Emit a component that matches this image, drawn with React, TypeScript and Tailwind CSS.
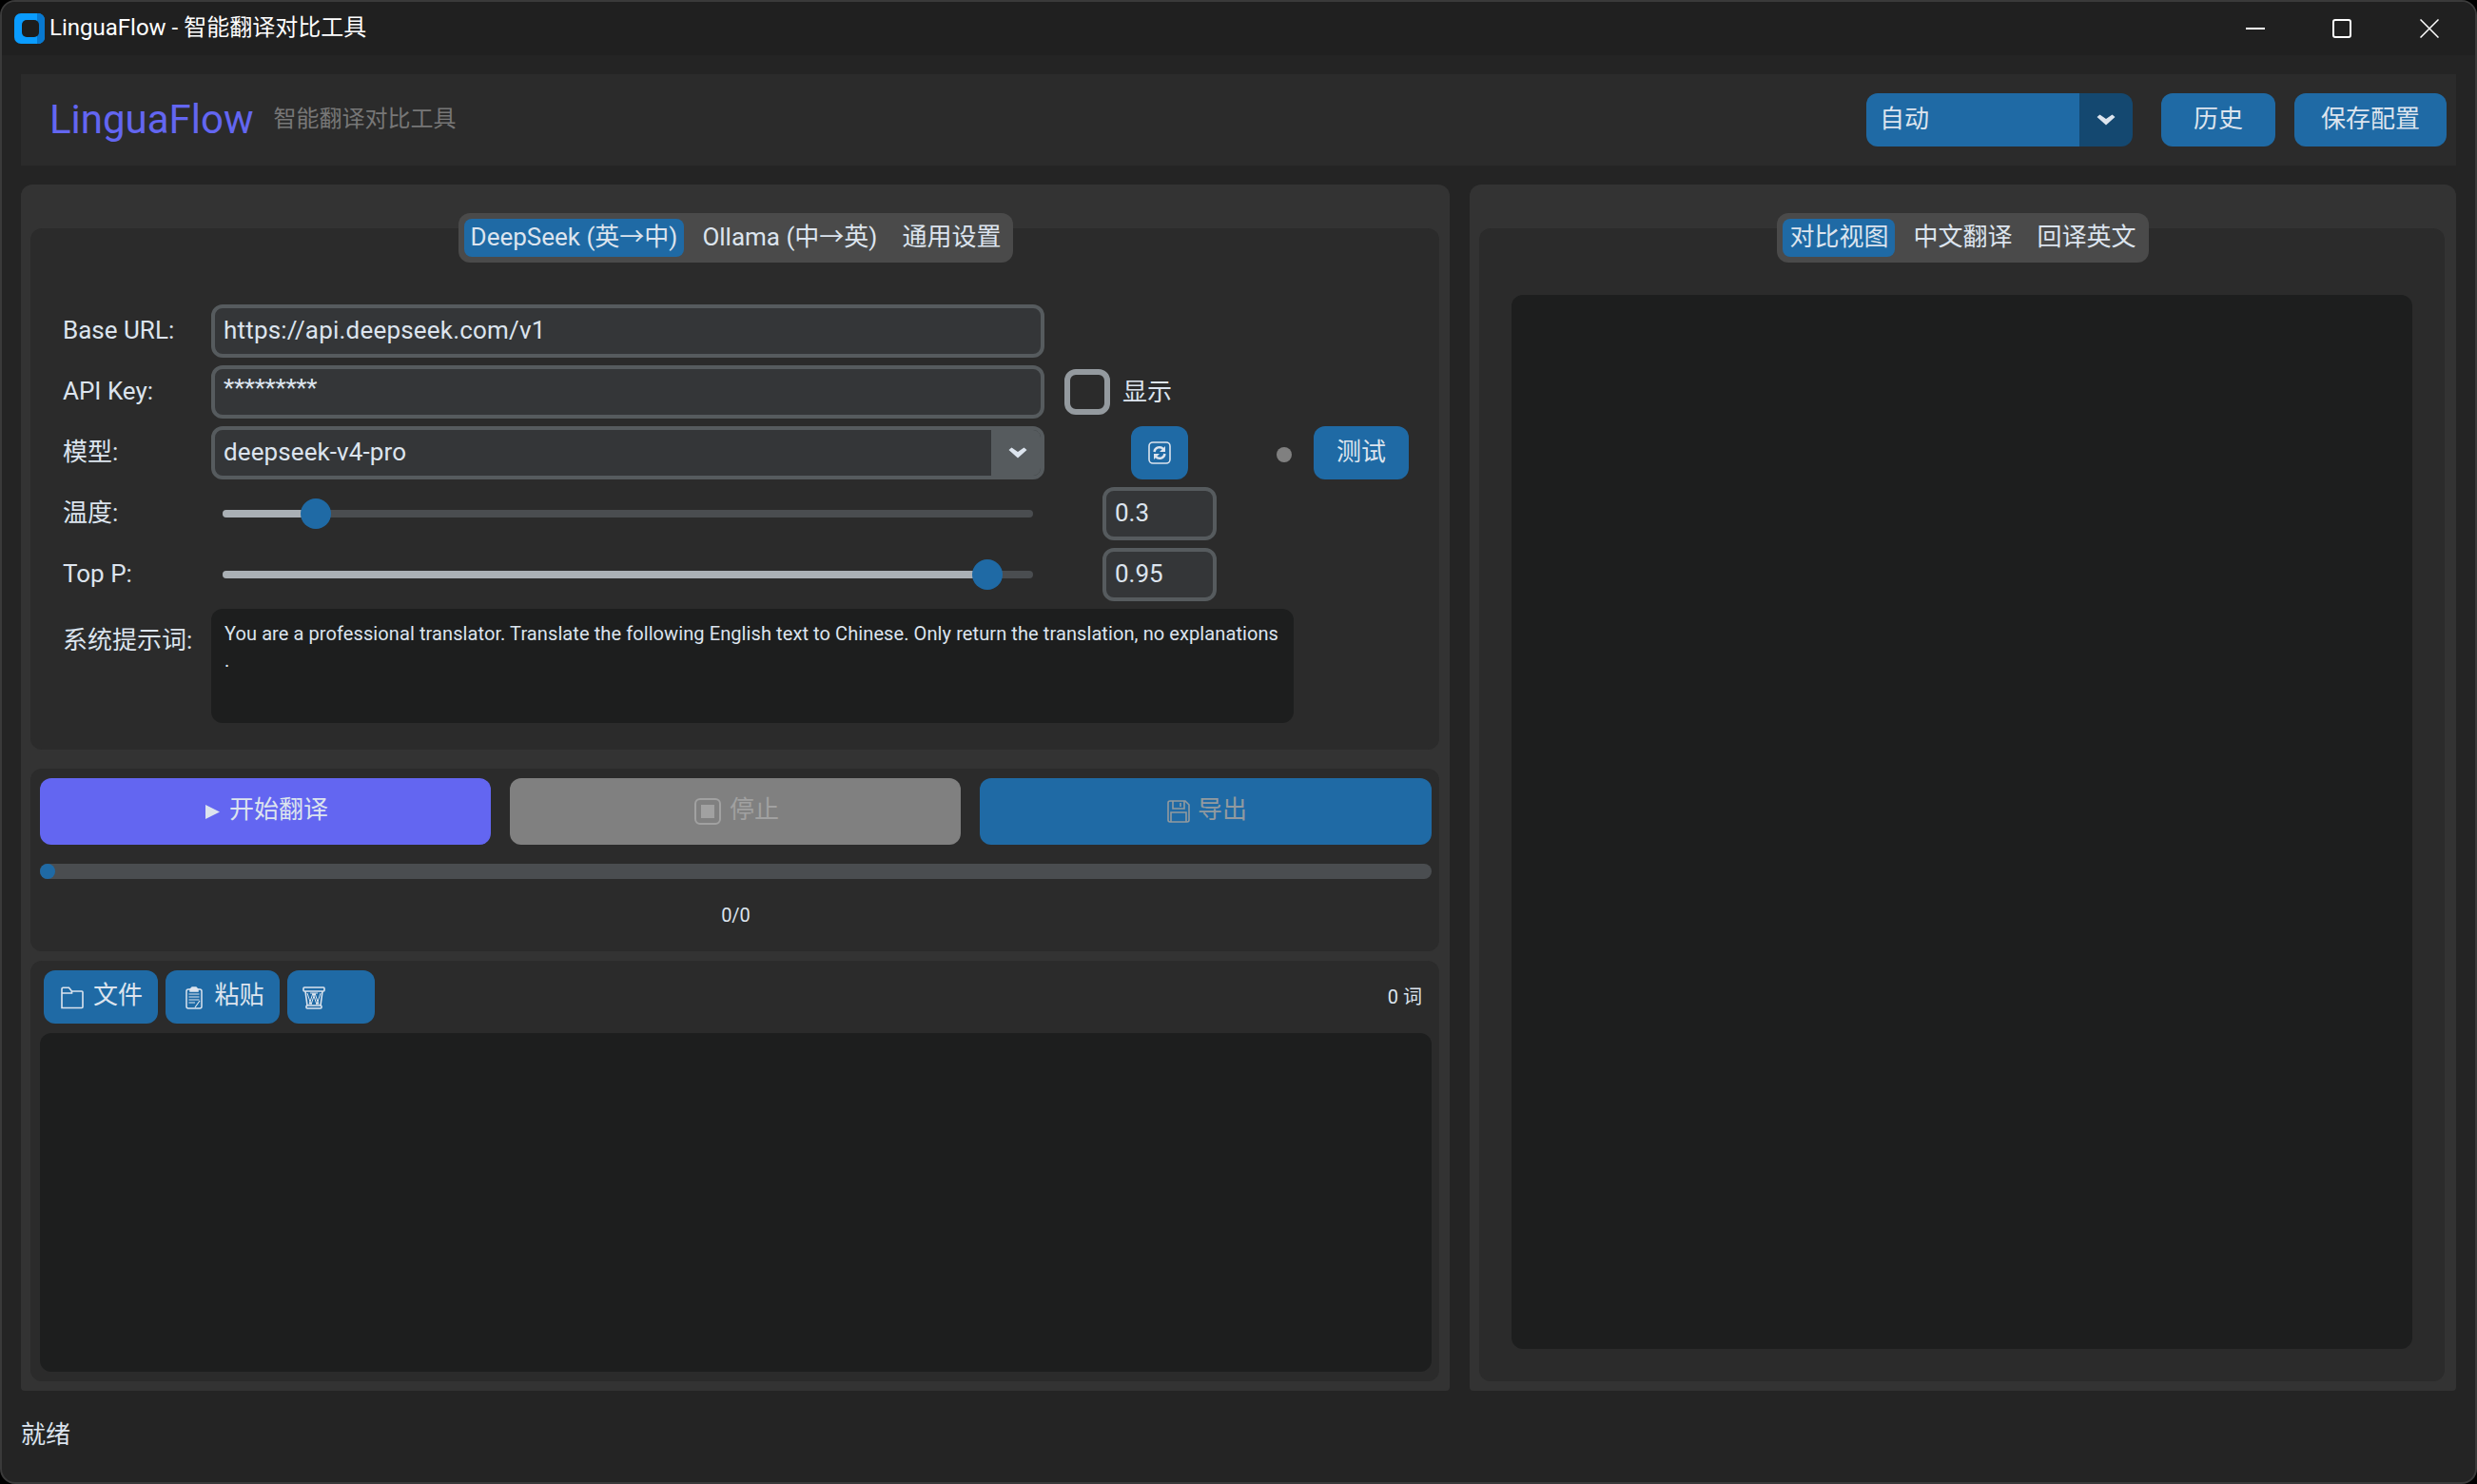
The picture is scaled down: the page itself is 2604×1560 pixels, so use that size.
import React from "react";

const Chevron = () => (
  <svg width="20" height="12" viewBox="0 0 20 12">
    <path d="M0.5 3 L3.5 0.5 L10 5 L16.5 0.5 L19.5 3 L10 11.5 Z" fill="#dce4ee" />
  </svg>
);

const FolderIcon = () => (
  <svg width="24" height="24" viewBox="0 0 24 24" fill="none" stroke="#dce4ee" strokeWidth="1.6">
    <path d="M1 22.5 V2.5 a1.2 1.2 0 0 1 1.2-1.2 H8.5 L11.5 5 H22 a1 1 0 0 1 1 1 V21.5 a1 1 0 0 1-1 1 Z" />
    <path d="M1 7 H11.5 L11.5 5" />
  </svg>
);

const ClipIcon = () => (
  <svg width="18" height="24" viewBox="0 0 18 24" fill="none" stroke="#dce4ee" strokeWidth="1.5">
    <rect x="1" y="3" width="16" height="20" rx="2" />
    <path d="M5 3 L7 1 H11 L13 3 V5 H5 Z" fill="#dce4ee" />
    <path d="M3.5 8 H14.5 M3.5 11 H14.5 M3.5 14 H14.5 M3.5 17 H10 M10 22 L15 15" strokeWidth="1.2" />
  </svg>
);

const TrashIcon = () => (
  <svg width="24" height="24" viewBox="0 0 24 24" fill="none" stroke="#dce4ee" strokeWidth="1.6">
    <rect x="1" y="1" width="22" height="4" rx="1" />
    <rect x="4" y="20" width="16" height="3" rx="1" />
    <path d="M3 5 L5 20 M21 5 L19 20" />
    <path d="M5 7 L9 19 L13 7 L17 19 M19 7 L15 19 L11 7 L7 19 M8 7 H16" strokeWidth="1" />
  </svg>
);

const RefreshIcon = () => (
  <svg width="24" height="24" viewBox="0 0 24 24" fill="none" stroke="#dce4ee" strokeWidth="1.6">
    <rect x="1" y="1" width="22" height="22" rx="4" />
    <path d="M6.5 11 A5.5 5.5 0 0 1 16 8" strokeWidth="2.4" />
    <path d="M17.5 13 A5.5 5.5 0 0 1 8 16" strokeWidth="2.4" />
    <path d="M18 5 V11 H12 Z M6 19 V13 H12 Z" fill="#dce4ee" stroke="none" />
  </svg>
);

const StopIcon = () => (
  <svg width="28" height="28" viewBox="0 0 28 28" fill="none" stroke="#a1a1a1" strokeWidth="2">
    <rect x="1" y="1" width="26" height="26" rx="5" />
    <rect x="7" y="7" width="14" height="14" fill="#a1a1a1" stroke="none" />
  </svg>
);

const SaveIcon = () => (
  <svg width="24" height="24" viewBox="0 0 24 24" fill="none" stroke="#929a9f" strokeWidth="1.6">
    <path d="M3 1 H19 L23 5 V21 a2 2 0 0 1-2 2 H3 a2 2 0 0 1-2-2 V3 a2 2 0 0 1 2-2 Z" />
    <path d="M6 1 V9 H18 V1 M14 3 V7 M4 23 V13 H20 V23" />
  </svg>
);

const Field = ({ className, children }: { className: string; children?: React.ReactNode }) => (
  <div className={`h-14 flex items-center rounded-xl border-4 border-[#565b5e] bg-[#343638] pl-[9px] pb-[2px] ${className}`}>
    {children}
  </div>
);

const Label = ({ children }: { children: React.ReactNode }) => (
  <div className="w-[156px] shrink-0 -mt-[2px]">{children}</div>
);

const Slider = ({ fill, thumb }: { fill: string; thumb: string }) => (
  <div className="relative w-[852px] h-2 ml-3 rounded-full bg-[#4a4d50]">
    <div className={`h-2 rounded-full bg-[#aab0b5] ${fill}`} />
    <div className={`absolute top-[-12px] w-8 h-8 rounded-full bg-[#1f6aa5] ${thumb}`} />
  </div>
);

const Btn = ({ className, children }: { className: string; children: React.ReactNode }) => (
  <div className={`flex items-center justify-center rounded-xl bg-[#1f6aa5] ${className}`}>{children}</div>
);

const Tabs = ({ items }: { items: string[] }) => (
  <div className="flex justify-center h-[52px] -mb-9 relative z-10 pl-[2px]">
    <div className="flex items-center gap-[12px] h-[52px] px-[6px] rounded-xl bg-[#4a4a4a]">
      {items.map((t, i) => (
        <div key={t} className={`h-10 flex items-center px-[7px] pb-[2px] rounded-lg ${i === 0 ? "bg-[#1f6aa5]" : ""}`}>
          {t}
        </div>
      ))}
    </div>
  </div>
);

export default function App() {
  return (
    <div className="w-[2604px] h-[1560px] bg-black overflow-hidden font-[Roboto,'Noto_Sans_CJK_SC',sans-serif] text-[26px] text-[#dce4ee] leading-none">
      <div className="w-full h-full flex flex-col rounded-2xl border-2 border-[#3a3a3a] bg-[#242424] overflow-hidden">
        {/* title bar */}
        <div className="h-14 shrink-0 flex items-center bg-[#202020] text-white text-[24px]">
          <svg className="ml-[13px] mr-[5px]" width="32" height="32" viewBox="0 0 32 32">
            <rect width="32" height="32" rx="7" fill="#0a9cff" />
            <path d="M24 0 h1 a7 7 0 0 1 7 7 v18 a7 7 0 0 1-7 7 h-1 Z" fill="#0878cf" />
            <rect x="8" y="7" width="18" height="18" rx="5" fill="#1d1d1d" />
          </svg>
          <span className="-mt-[2px]">LinguaFlow - 智能翻译对比工具</span>
          <div className="ml-auto flex h-full items-center pr-[2px]">
            <div className="w-[92px] flex justify-center pl-[2px]">
              <div className="w-5 h-[2px] bg-white" />
            </div>
            <div className="w-[92px] flex justify-center">
              <div className="w-5 h-5 border-2 border-white rounded-[3px]" />
            </div>
            <div className="w-[92px] flex justify-center">
              <svg width="20" height="20" viewBox="0 0 20 20" stroke="#fff" strokeWidth="1.5">
                <path d="M0.5 0.5 L19.5 19.5 M19.5 0.5 L0.5 19.5" />
              </svg>
            </div>
          </div>
        </div>

        {/* header */}
        <div className="mt-5 mx-5 h-24 shrink-0 flex items-center bg-[#2b2b2b] pl-[30px] pr-[10px]">
          <span className="text-[42px] text-[#6366f1]">LinguaFlow</span>
          <span className="ml-[21px] -mt-[2px] text-[24px] text-[#777777]">智能翻译对比工具</span>
          <div className="ml-auto flex h-14 w-[280px] rounded-xl overflow-hidden">
            <div className="flex-1 flex items-center pl-[14px] pb-[2px] bg-[#1f6aa5]">自动</div>
            <div className="w-14 flex items-center justify-center bg-[#144870]">
              <Chevron />
            </div>
          </div>
          <Btn className="ml-[30px] w-[120px] h-14 pb-[2px]">历史</Btn>
          <Btn className="ml-5 w-40 h-14 pb-[2px]">保存配置</Btn>
        </div>

        {/* main */}
        <div className="mt-5 mx-5 h-[1268px] shrink-0 flex gap-[21px]">
          {/* left */}
          <div className="w-[1502px] flex flex-col pt-[30px] pl-[10px] pr-[11px] pb-[10px] rounded-t-xl rounded-b-[4px] bg-[#333333]">
            <Tabs items={["DeepSeek (英→中)", "Ollama (中→英)", "通用设置"]} />
            <div className="h-[548px] shrink-0 rounded-xl bg-[#2b2b2b] pt-20 pl-[34px] flex flex-col gap-2">
              <div className="flex items-center h-14">
                <Label>Base URL:</Label>
                <Field className="w-[876px]">
                  <span className="tracking-[0.2px]">https://api.deepseek.com/v1</span>
                </Field>
              </div>
              <div className="flex items-center h-14">
                <Label>API Key:</Label>
                <Field className="w-[876px]">
                  <span className="-mt-[6px] tracking-[-0.3px]">*********</span>
                </Field>
                <div className="ml-[21px] w-12 h-12 rounded-xl border-[6px] border-[#949a9f]" />
                <span className="ml-[13px]">显示</span>
              </div>
              <div className="flex items-center h-14">
                <Label>模型:</Label>
                <Field className="w-[876px] !pr-0 !pb-0 overflow-hidden">
                  <span className="flex-1 pb-[2px] tracking-[0.1px]">deepseek-v4-pro</span>
                  <div className="w-[52px] h-full flex items-center justify-center pl-1 bg-[#565b5e]">
                    <Chevron />
                  </div>
                </Field>
                <Btn className="ml-[91px] w-[60px] h-14">
                  <RefreshIcon />
                </Btn>
                <div className="ml-[93px] mt-[3px] w-4 h-4 rounded-full bg-[#808080]" />
                <Btn className="ml-[23px] w-[100px] h-14 pb-[3px]">测试</Btn>
              </div>
              <div className="flex items-center h-14">
                <Label>温度:</Label>
                <Slider fill="w-[98px]" thumb="left-[82px]" />
                <Field className="ml-[73px] w-[120px]">0.3</Field>
              </div>
              <div className="flex items-center h-14">
                <Label>Top P:</Label>
                <Slider fill="w-[804px]" thumb="left-[788px]" />
                <Field className="ml-[73px] w-[120px]">0.95</Field>
              </div>
              <div className="flex">
                <div className="w-[156px] shrink-0 pt-[20px]">系统提示词:</div>
                <div className="w-[1138px] h-[120px] rounded-xl bg-[#1d1e1e] pl-[14px] pt-[12px] text-[20px] leading-[28px] tracking-[0.09px]">
                  <div>You are a professional translator. Translate the following English text to Chinese. Only return the translation, no explanations</div>
                  <div>.</div>
                </div>
              </div>
            </div>

            <div className="mt-5 h-[192px] shrink-0 rounded-xl bg-[#2b2b2b] pt-[10px] pl-[10px] pr-2 flex flex-col">
              <div className="flex gap-5 h-[70px]">
                <div className="w-[474px] flex items-center justify-center gap-[10px] pl-[3px] rounded-xl bg-[#6366f1]">
                  <svg width="15" height="15" viewBox="0 0 15 15"><path d="M0 0 L15 7.5 L0 15 Z" fill="#dce4ee" /></svg>
                  <span className="-mt-1">开始翻译</span>
                </div>
                <div className="w-[474px] flex items-center justify-center gap-[9px] pl-[3px] rounded-xl bg-[#808080] text-[#a1a1a1]">
                  <StopIcon />
                  <span className="-mt-1">停止</span>
                </div>
                <div className="flex-1 flex items-center justify-center gap-[8px] pl-[3px] rounded-xl bg-[#1f6aa5] text-[#929a9f]">
                  <SaveIcon />
                  <span className="-mt-1">导出</span>
                </div>
              </div>
              <div className="mt-5 h-4 rounded-full bg-[#4a4d50]">
                <div className="w-4 h-4 rounded-full bg-[#1f6aa5]" />
              </div>
              <div className="mt-[28px] text-center text-[20px]">0/0</div>
            </div>

            <div className="mt-[10px] flex-1 rounded-xl bg-[#2b2b2b] pt-[10px] pl-[10px] pr-2 pb-[10px] flex flex-col">
              <div className="h-14 shrink-0 flex items-center gap-2 pl-1 pr-[10px]">
                <Btn className="w-[120px] h-14 gap-[10px]">
                  <span className="mt-[2px] ml-[2px]"><FolderIcon /></span>
                  <span className="-mt-1">文件</span>
                </Btn>
                <Btn className="w-[120px] h-14 gap-[12px]">
                  <span className="mt-[2px] ml-[5px]"><ClipIcon /></span>
                  <span className="-mt-1">粘贴</span>
                </Btn>
                <Btn className="w-[92px] h-14 !justify-start pl-[16px]">
                  <span className="mt-[2px]"><TrashIcon /></span>
                </Btn>
                <span className="ml-auto text-[20px]">0 词</span>
              </div>
              <div className="mt-[10px] flex-1 rounded-xl bg-[#1d1e1e]" />
            </div>
          </div>

          {/* right */}
          <div className="flex-1 flex flex-col pt-[30px] pl-[10px] pr-3 pb-[10px] rounded-t-xl rounded-b-[4px] bg-[#333333]">
            <Tabs items={["对比视图", "中文翻译", "回译英文"]} />
            <div className="flex-1 rounded-xl bg-[#2b2b2b] pt-[70px] px-[34px] pb-[34px] flex">
              <div className="flex-1 rounded-xl bg-[#1d1e1e]" />
            </div>
          </div>
        </div>

        {/* status */}
        <div className="flex-1 flex items-center pl-5 pb-[4px]">就绪</div>
      </div>
    </div>
  );
}
